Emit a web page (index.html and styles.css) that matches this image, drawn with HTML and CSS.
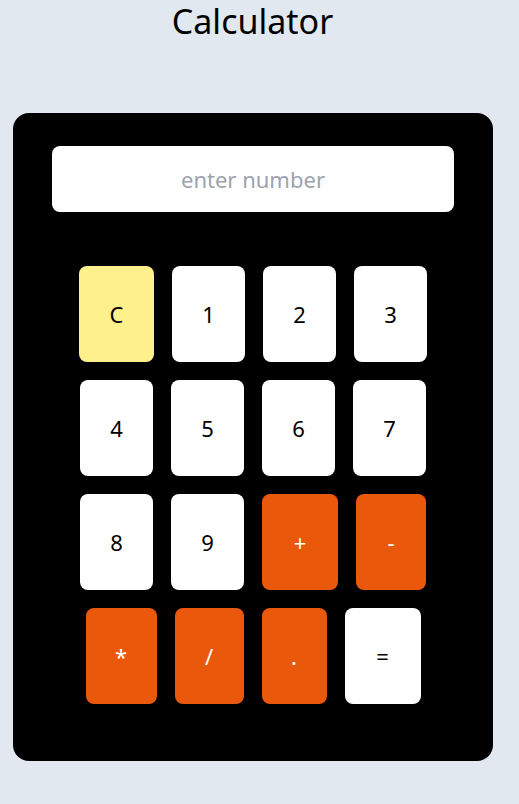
FILE: index.html
```html
<!DOCTYPE html>
<html lang="en">
<head>
<meta charset="utf-8">
<title>Calculator</title>
<link rel="stylesheet" href="styles.css">
</head>
<body>
<main class="page">
  <h1 class="title">Calculator</h1>
  <section class="calc">
    <input class="display" type="text" placeholder="enter number">
    <div class="keys">
      <div class="row">
        <button class="key key-clear w75">C</button>
        <button class="key w73">1</button>
        <button class="key w73">2</button>
        <button class="key w73">3</button>
      </div>
      <div class="row">
        <button class="key w73">4</button>
        <button class="key w73">5</button>
        <button class="key w73">6</button>
        <button class="key w73">7</button>
      </div>
      <div class="row">
        <button class="key w73">8</button>
        <button class="key w73">9</button>
        <button class="key key-op w76">+</button>
        <button class="key key-op w70">-</button>
      </div>
      <div class="row">
        <button class="key key-op w71">*</button>
        <button class="key key-op w69">/</button>
        <button class="key key-op w65">.</button>
        <button class="key w76">=</button>
      </div>
    </div>
  </section>
</main>
</body>
</html>
```
FILE: styles.css
```css
* { box-sizing: border-box; }
html, body {
  margin: 0;
  background: #e2e8f0;
  font-family: "Noto Sans", "Open Sans", sans-serif;
  color: #000;
}
.page {
  width: 479px;
  margin-left: 13px;
}
.title {
  margin: 0;
  height: 113px;
  text-align: center;
  font-size: 34px;
  font-weight: 400;
  line-height: 42px;
}
.calc {
  width: 480px;
  background: #000;
  border-radius: 16px;
  height: 648px;
  padding: 33px 39px 0;
}
.display {
  display: block;
  width: 100%;
  height: 66px;
  border: 0;
  border-radius: 8px;
  background: #fff;
  font-family: inherit;
  font-size: 22px;
  text-align: center;
  outline: none;
}
.display::placeholder { color: #9ca3af; }
.keys {
  margin-top: 54px;
  display: flex;
  flex-direction: column;
  gap: 18px;
}
.row {
  display: flex;
  justify-content: center;
  gap: 18px;
}
.key {
  height: 96px;
  border: 0;
  border-radius: 8px;
  background: #fff;
  color: #000;
  font-family: inherit;
  font-size: 22px;
  padding: 0;
}
.key-clear { background: #fef08a; }
.key-op { background: #ea580c; color: #fff; }
.w65 { width: 65px; }
.w69 { width: 69px; }
.w70 { width: 70px; }
.w71 { width: 71px; }
.w73 { width: 73px; }
.w75 { width: 75px; }
.w76 { width: 76px; }
```
